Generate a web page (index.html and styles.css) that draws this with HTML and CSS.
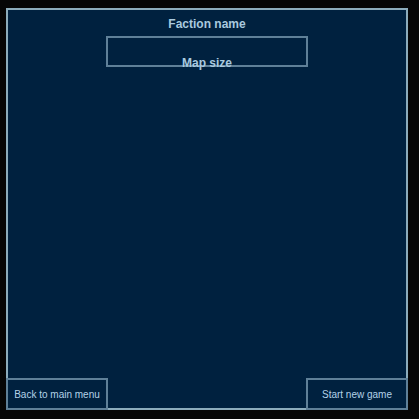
FILE: index.html
```html
<!DOCTYPE html>
<html>
<head>
<meta charset="utf-8">
<link rel="stylesheet" href="styles.css">
</head>
<body>
<div class="panel">
  <div class="title">Faction name</div>
  <div class="map-box"><span class="map-label">Map size</span></div>
  <div class="spacer"></div>
  <div class="footer">
    <button class="btn">Back to main menu</button>
    <button class="btn">Start new game</button>
  </div>
</div>
</body>
</html>
```
FILE: styles.css
```css
html, body {
  margin: 0;
  padding: 0;
  background: #060606;
  width: 419px;
  height: 419px;
  overflow: hidden;
}
body {
  padding: 8px 0 0 6px;
  box-sizing: border-box;
  font-family: "Liberation Sans", Arial, sans-serif;
}
.panel {
  width: 402px;
  height: 402px;
  box-sizing: border-box;
  background: #00213f;
  box-shadow: inset 0 0 0 2px #8cacbc;
  display: flex;
  flex-direction: column;
  align-items: center;
}
.title {
  margin-top: 9px;
  font-size: 12px;
  font-weight: bold;
  line-height: 14px;
  color: #a9c9df;
}
.map-box {
  margin-top: 5px;
  width: 202px;
  height: 31px;
  box-sizing: border-box;
  border: 2px solid #5f8098;
  text-align: center;
  padding-top: 18px;
}
.map-label {
  display: block;
  font-size: 12px;
  font-weight: bold;
  line-height: 14px;
  color: #a9c9df;
}
.spacer {
  flex: 1;
}
.footer {
  align-self: stretch;
  display: flex;
  justify-content: space-between;
}
.btn {
  width: 102px;
  height: 32px;
  box-sizing: border-box;
  border: 2px solid #5f8098;
  background: #00213f;
  color: #b4d2e8;
  font-family: "Liberation Sans", Arial, sans-serif;
  font-size: 10px;
  padding: 0;
  margin: 0;
}
```
